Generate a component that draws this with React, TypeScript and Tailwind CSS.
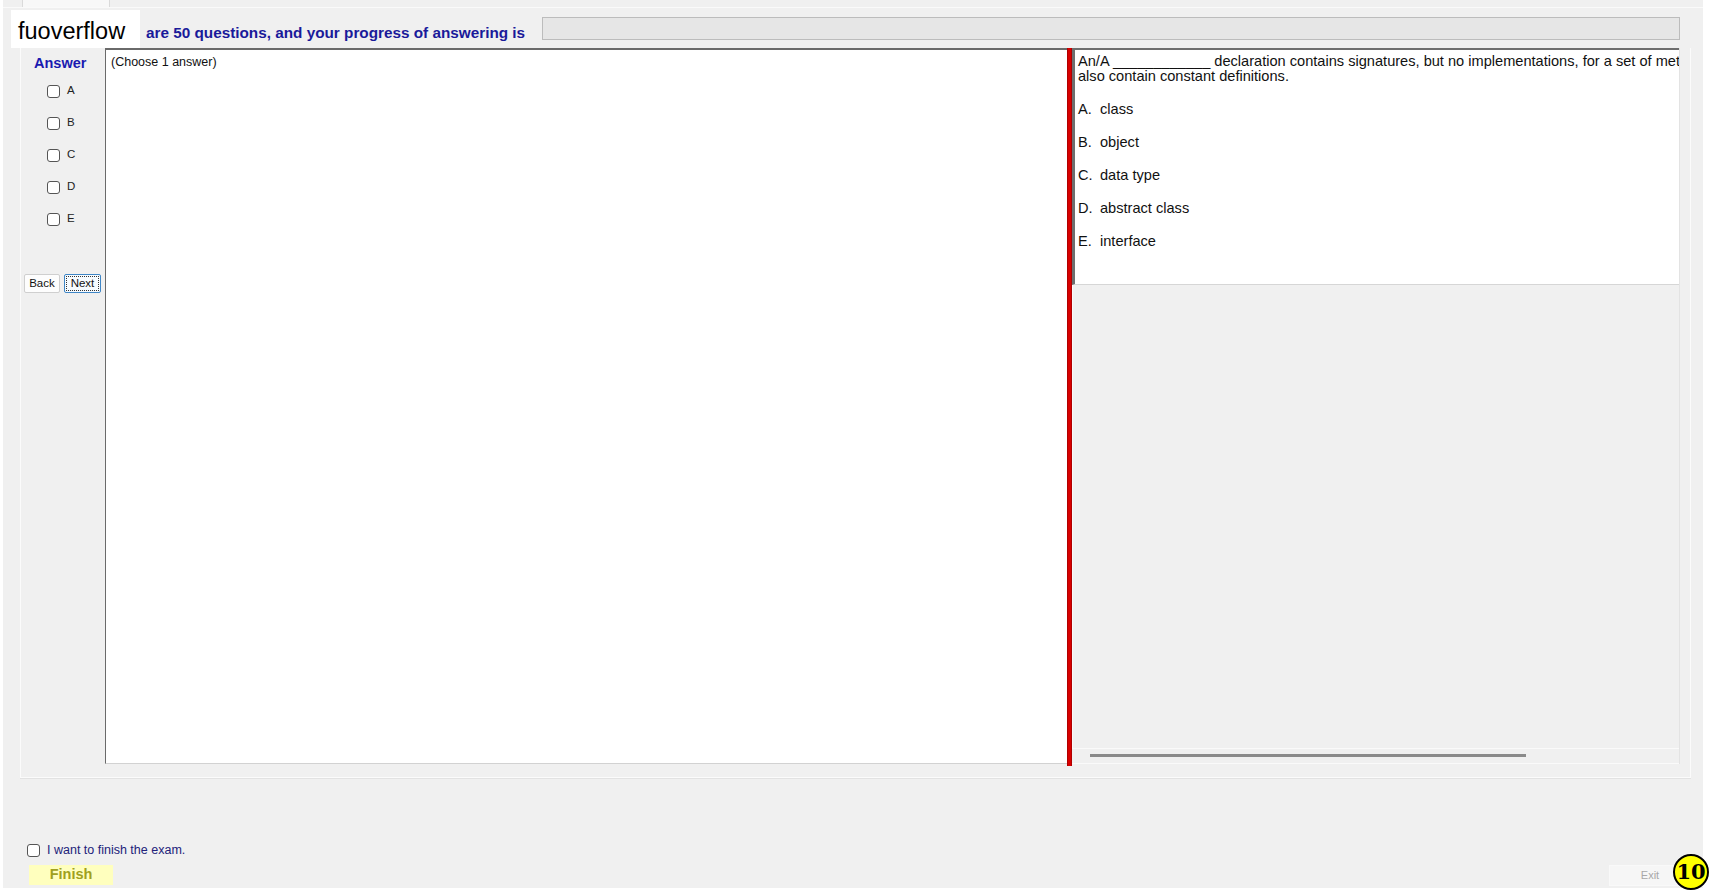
import React from "react";

const Check = () => (
  <span className="inline-block w-[13px] h-[13px] rounded-[3px] border border-[#555] bg-white" />
);

const letters = ["A", "B", "C", "D", "E"];
const options = [
  ["A.", "class"],
  ["B.", "object"],
  ["C.", "data type"],
  ["D.", "abstract class"],
  ["E.", "interface"],
];

export default function App() {
  return (
    <div
      className="w-[1713px] h-[893px] bg-white overflow-hidden relative"
      style={{ fontFamily: '"Liberation Sans", Arial, sans-serif' }}
    >
      <div className="ml-[3px] w-[1700px] h-[888px] bg-[#f0f0f0] flex flex-col relative">
        {/* top tab strip */}
        <div className="h-[8px] border-b border-[#fafafa] flex">
          <div className="ml-[19px] w-[88px] h-full bg-[#f8f8f8] border-x border-[#dadada]" />
        </div>

        {/* header */}
        <div className="h-[40px] flex items-start">
          <div className="ml-[8px] mt-[2px] w-[129px] h-[38px] bg-white flex items-center pl-[7px] pt-[6px]">
            <span className="text-[23.5px] text-black leading-none">fuoverflow</span>
          </div>
          <div className="ml-[6px] w-[396px] mt-[16px] text-[15.3px] font-bold text-[#1a1a9a] leading-[18px] whitespace-nowrap">
            are 50 questions, and your progress of answering is
          </div>
          <div className="mt-[9px] w-[1138px] h-[23px] bg-[#e6e6e6] border border-[#bcbcbc]" />
        </div>

        {/* main group */}
        <div className="ml-[17px] w-[1671px] h-[730px] border-l border-r border-b border-[#fbfbfb] shadow-[0_1px_0_#e2e2e2]">
          <div className="h-[716px] flex">
            {/* answer column */}
            <div className="w-[84px] flex flex-col">
              <div className="pt-[7px] ml-[13px] text-[14.5px] leading-[16px] font-bold text-[#1a1ab0]">
                Answer
              </div>
              <div className="mt-[4px] flex flex-col">
                {letters.map((l) => (
                  <div key={l} className="h-[32px] flex items-center ml-[26px] gap-[7px]">
                    <Check />
                    <span className="text-[11.5px] text-[#222]">{l}</span>
                  </div>
                ))}
              </div>
              <div className="mt-[39px] flex ml-[3px] gap-[4px]">
                <div className="w-[36px] h-[19px] bg-[#fdfdfd] border border-[#cfcfcf] rounded-[2px] flex items-center justify-center text-[11.5px] text-[#111]">
                  Back
                </div>
                <div className="w-[37px] h-[19px] bg-[#f6fbff] border border-[#3f86c6] rounded-[2px] p-[1px]">
                  <div className="w-full h-full border border-dotted border-[#333] flex items-center justify-center text-[11.5px] text-[#111]">
                    Next
                  </div>
                </div>
              </div>
            </div>

            {/* white answer area */}
            <div className="w-[962px] h-full bg-white border-l border-l-[#6a6a6a] border-t-2 border-t-[#6a6a6a] border-b border-b-[#d2d2d2] pl-[5px] pt-[5px]">
              <div className="text-[12.5px] leading-[14px] text-[#111]">(Choose 1 answer)</div>
            </div>

            {/* red splitter */}
            <div className="w-[5px] h-[718px] bg-[#d80000] border-x border-[#b00000]" />

            {/* right panel */}
            <div className="w-[608px] h-full flex flex-col border-r border-[#e3e3e3]">
              <div className="h-[237px] bg-white border-l-[3px] border-l-[#6e6e6e] border-t-2 border-t-[#6e6e6e] border-b border-b-[#d6d6d6] overflow-hidden pl-[3px] pt-[4px] text-[14.6px] text-[#111]">
                <div className="whitespace-nowrap leading-[15px]">
                  An/A ____________ declaration contains signatures, but no implementations, for a set of methods, and may
                </div>
                <div className="whitespace-nowrap leading-[15px]">also contain constant definitions.</div>
                <div className="mt-[18px] flex flex-col">
                  {options.map(([k, v]) => (
                    <div key={k} className="h-[33px] leading-[15px] whitespace-nowrap flex">
                      <span className="w-[22px]">{k}</span>
                      <span>{v}</span>
                    </div>
                  ))}
                </div>
              </div>
              <div className="flex-1 border-l border-[#fafafa]" />
              <div className="h-[16px] border-t border-[#fafafa] border-b border-b-[#fafafa] pt-[5px]">
                <div className="ml-[18px] w-[436px] h-[3px] bg-[#8a8a8a]" />
              </div>
            </div>
          </div>
        </div>

        {/* bottom section */}
        <div className="flex-1 flex flex-col">
          <div className="mt-[65px] ml-[24px] h-[14px] flex items-center gap-[7px]">
            <Check />
            <span className="text-[12.5px] text-[#22227a] leading-none">I want to finish the exam.</span>
          </div>
          <div className="mt-[8px] flex">
            <div className="ml-[26px] w-[84px] h-[20px] bg-[#ffffbe] flex items-center justify-center text-[14.5px] font-bold text-[#a0a020]">
              Finish
            </div>
            <div className="ml-auto mr-[12px] w-[82px] h-[21px] bg-[#f6f6f6] border border-[#f9f9f9] flex items-center justify-center text-[11px] text-[#a8a8a8]">
              Exit
            </div>
          </div>
        </div>
      </div>

      {/* number badge */}
      <div
        className="absolute left-[1673px] top-[854px] w-[36px] h-[36px] rounded-full bg-[#ffff00] border-2 border-black flex items-center justify-center text-[21px] font-bold text-black"
        style={{ fontFamily: '"DejaVu Serif", serif' }}
      >
        10
      </div>
    </div>
  );
}
